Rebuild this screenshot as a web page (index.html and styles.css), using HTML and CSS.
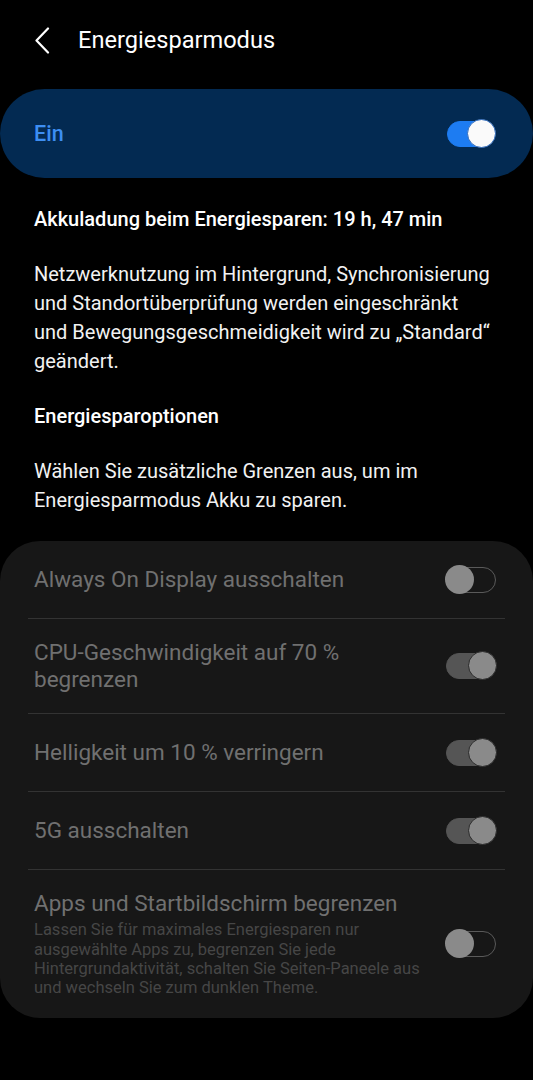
FILE: index.html
```html
<!DOCTYPE html>
<html lang="de">
<head>
  <meta charset="UTF-8">
  <title>Energiesparmodus</title>
  <link rel="stylesheet" href="styles.css">
</head>
<body>

<header class="header">
  <svg class="back" width="16" height="27" viewBox="0 0 16 27">
    <path d="M14 1.5 L2.5 13.5 L14 25.5" fill="none" stroke="#fff" stroke-width="2.2" stroke-linecap="round" stroke-linejoin="round"/>
  </svg>
  <h1 class="title">Energiesparmodus</h1>
</header>

<div class="master">
  <span class="master-label">Ein</span>
  <span class="switch switch-primary on"></span>
</div>

<section class="info">
  <p class="strong">Akkuladung beim Energiesparen: 19 h, 47 min</p>
  <p>Netzwerknutzung im Hintergrund, Synchronisierung und Standortüberprüfung werden eingeschränkt und Bewegungsgeschmeidigkeit wird zu „Standard“ geändert.</p>
  <p class="strong">Energiesparoptionen</p>
  <p>Wählen Sie zusätzliche Grenzen aus, um im Energiesparmodus Akku zu sparen.</p>
</section>

<ul class="options">
  <li class="option">
    <div class="option-text">Always On Display ausschalten</div>
    <span class="switch"></span>
  </li>
  <li class="option option-tall">
    <div class="option-text">CPU-Geschwindigkeit auf 70 %<br>begrenzen</div>
    <span class="switch on"></span>
  </li>
  <li class="option">
    <div class="option-text">Helligkeit um 10 % verringern</div>
    <span class="switch on"></span>
  </li>
  <li class="option">
    <div class="option-text">5G ausschalten</div>
    <span class="switch on"></span>
  </li>
  <li class="option option-sub">
    <div class="option-text">
      Apps und Startbildschirm begrenzen
      <div class="option-desc">Lassen Sie für maximales Energiesparen nur ausgewählte Apps zu, begrenzen Sie jede Hintergrundaktivität, schalten Sie Seiten-Paneele aus und wechseln Sie zum dunklen Theme.</div>
    </div>
    <span class="switch"></span>
  </li>
</ul>

</body>
</html>
```

FILE: styles.css
```css
html,
body {
  margin: 0;
  background: #000;
  color: #f2f2f2;
  font-family: Roboto, 'Noto Sans', sans-serif;
}

.header {
  height: 80px;
  display: flex;
  align-items: center;
  padding-left: 34px;
}

.back {
  display: block;
}

.title {
  margin: 0 0 0 28px;
  font-size: 23.6px;
  font-weight: 400;
  color: #fff;
}

.master {
  margin-top: 9px;
  height: 89px;
  border-radius: 45px;
  background: #032a52;
  display: flex;
  align-items: center;
  justify-content: space-between;
  padding: 0 38px 0 34px;
}

.master-label {
  font-size: 21.5px;
  font-weight: 500;
  color: #3d8ef2;
}

.info {
  padding: 27px 40px 0 34px;
}

.info p {
  margin: 0 0 26px 0;
  font-size: 20px;
  line-height: 29px;
}

.info p.strong {
  font-weight: 500;
  color: #fff;
}

.options {
  list-style: none;
  margin: 0;
  padding: 0 28px 0 28px;
  background: #171717;
  border-radius: 40px;
}

.option {
  display: flex;
  align-items: center;
  justify-content: space-between;
  box-sizing: border-box;
  height: 78px;
  padding: 0 10px 0 6px;
  border-bottom: 1px solid #333;
}

.option-tall {
  height: 95px;
}

.option-sub {
  height: 148px;
  border-bottom: none;
}

.option-text {
  font-size: 22.5px;
  line-height: 27px;
  color: #707070;
}

.option-sub .option-text {
  width: 392px;
}

.option-desc {
  font-size: 16.5px;
  line-height: 19.4px;
  color: #464646;
  margin-top: 3px;
}

.switch {
  position: relative;
  flex: none;
  width: 50px;
  height: 26px;
  margin-right: -1px;
  border-radius: 13px;
  border: 1.5px solid #5a5a5a;
  box-sizing: border-box;
}

.switch:after {
  content: ' ';
  position: absolute;
  top: -3px;
  left: -2px;
  width: 29px;
  height: 29px;
  border-radius: 50%;
  background: #8a8a8a;
  box-sizing: border-box;
}

.switch.on {
  background: #555;
  border-color: #555;
}

.switch.on:after {
  left: auto;
  right: -2px;
  border: 1.5px solid #2a2a2a;
}

.switch-primary {
  width: 48px;
  margin-right: 0;
}

.switch-primary.on {
  background: #1d7cf2;
  border-color: #1d7cf2;
}

.switch-primary.on:after {
  background: #fafafa;
  border: 1.5px solid #2f6bbd;
}
```
